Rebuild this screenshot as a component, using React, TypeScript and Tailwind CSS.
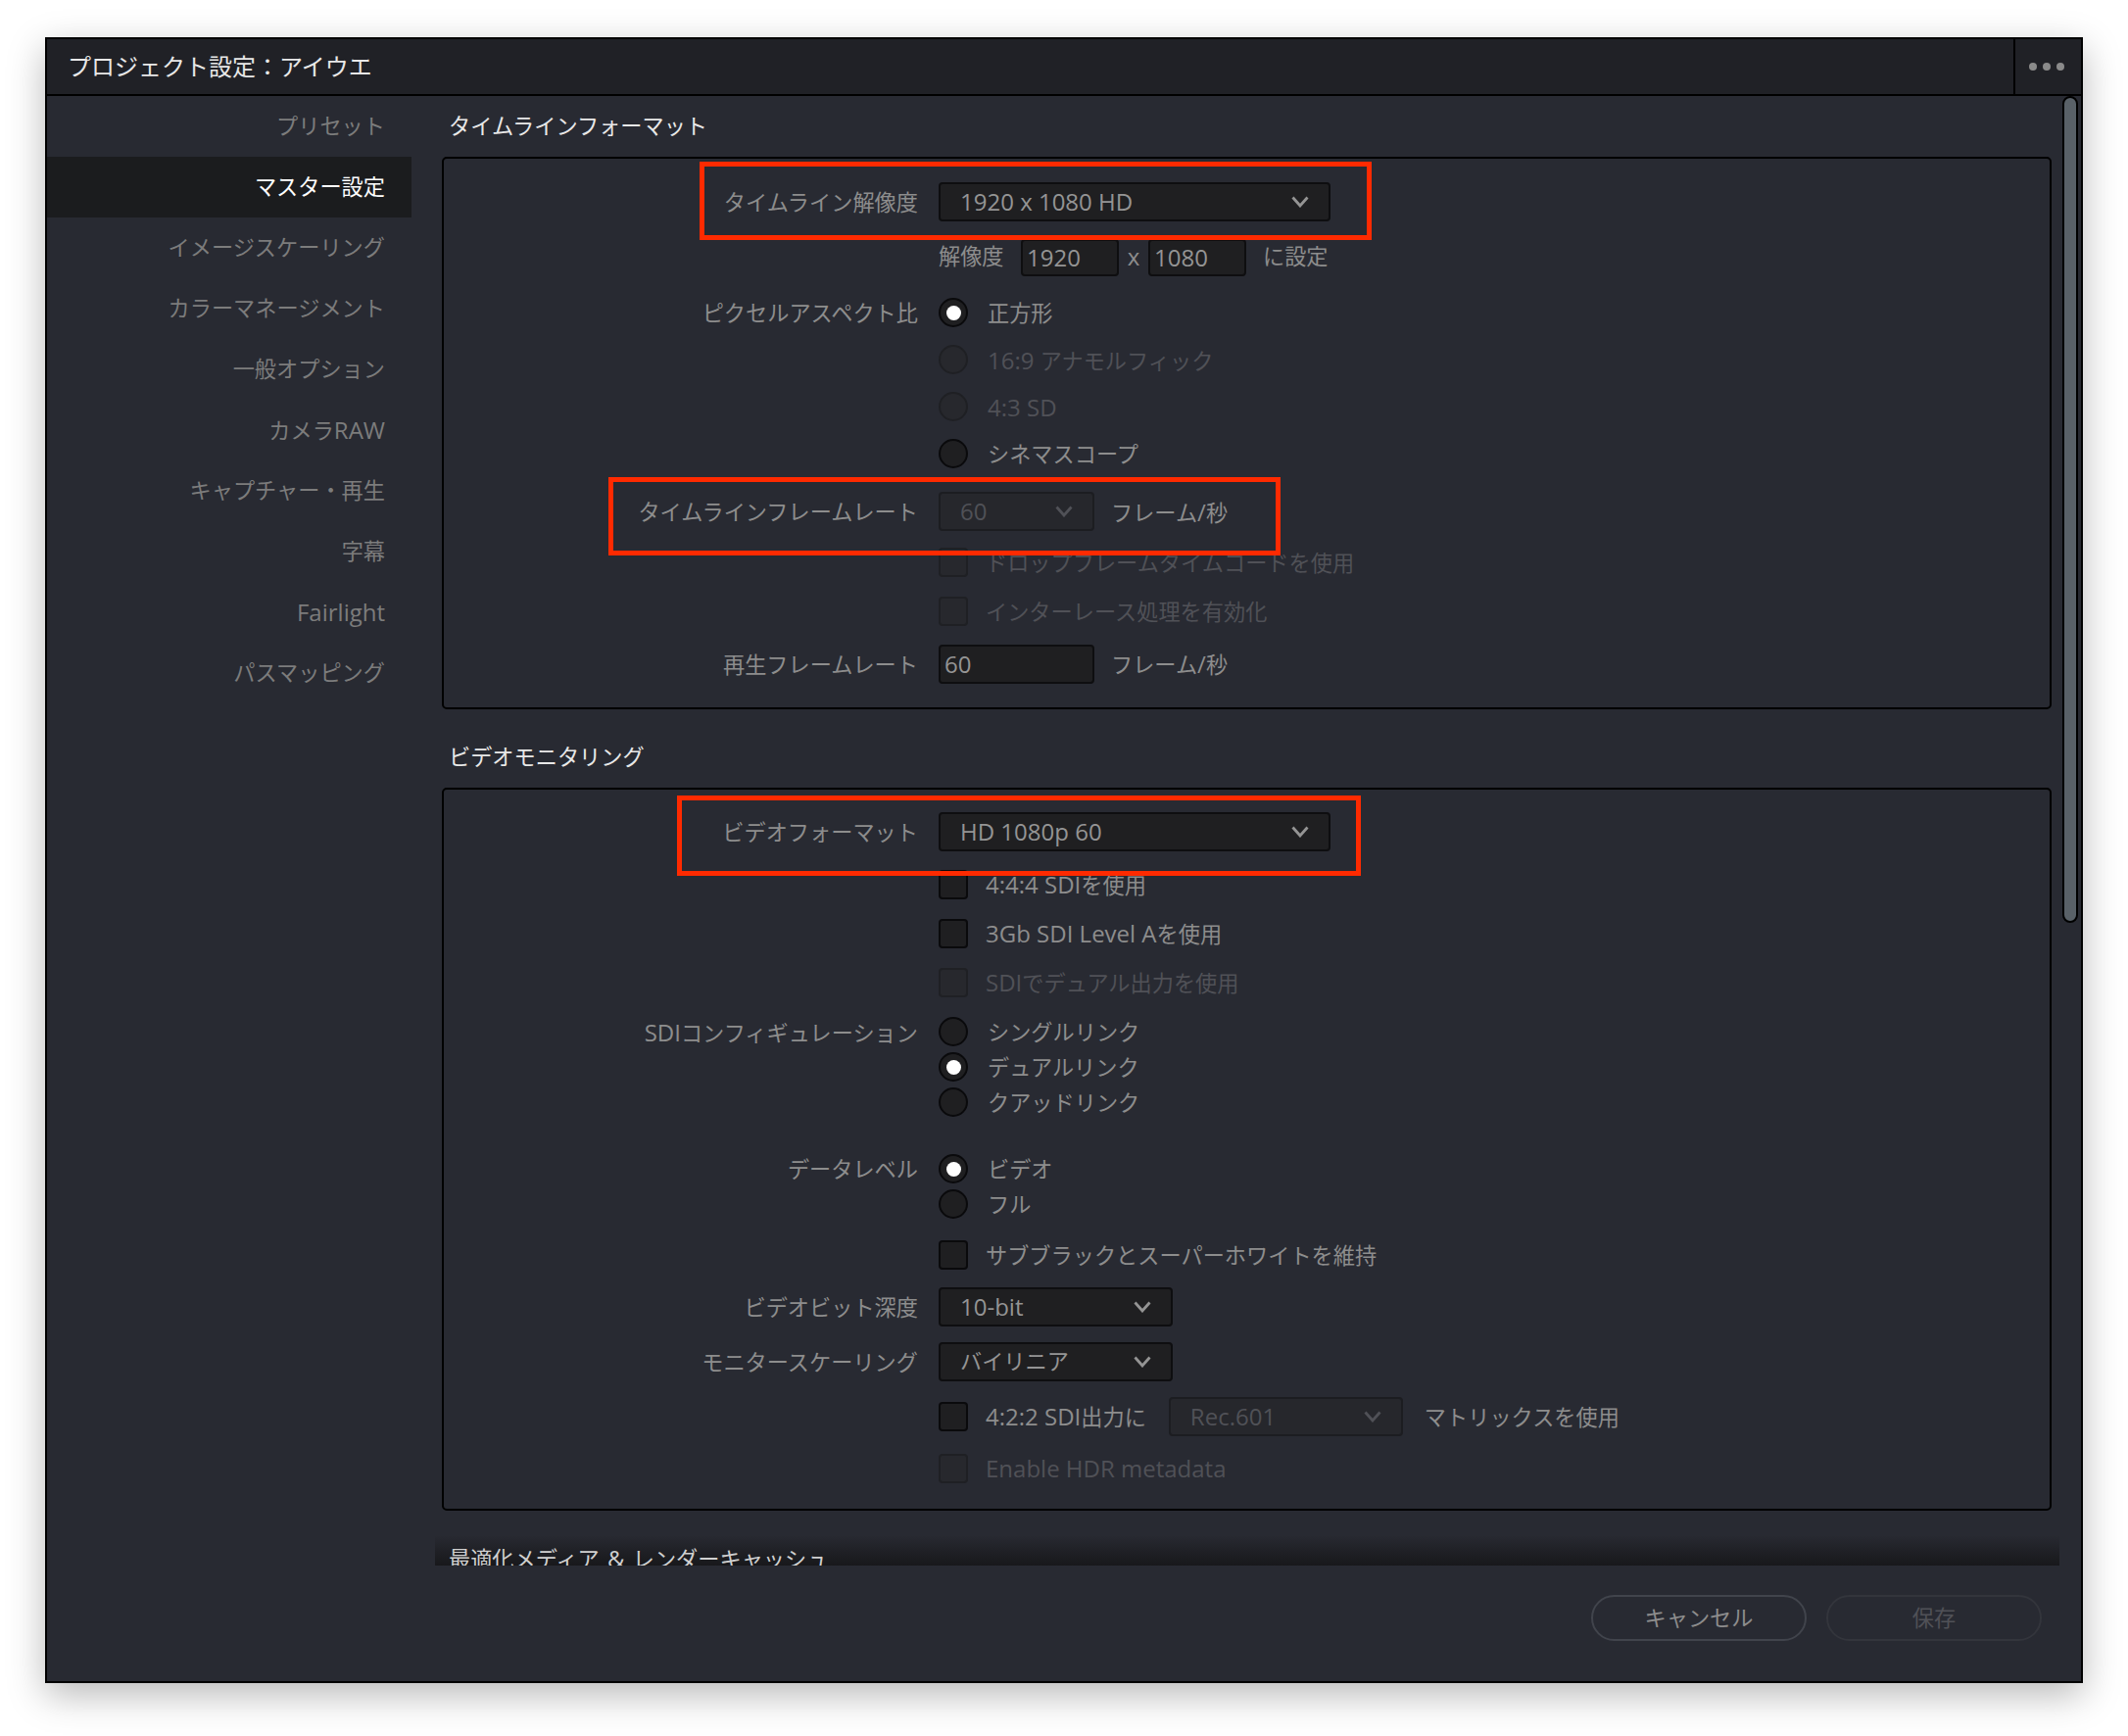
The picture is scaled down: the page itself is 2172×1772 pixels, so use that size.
import React from "react";

const NAV = ["プリセット", "マスター設定", "イメージスケーリング", "カラーマネージメント", "一般オプション", "カメラRAW", "キャプチャー・再生", "字幕", "Fairlight", "パスマッピング"];

/* Latin runs are set slightly larger than the Japanese ones, as in the reference. */
function T({ children }: { children: string }) {
  const parts = children.split(/([\x00-\x7F]+)/).filter(Boolean);
  return (
    <>
      {parts.map((p, i) =>
        /^[\x00-\x7F]+$/.test(p) ? (
          <span key={i} className="text-[24px] whitespace-pre">{p}</span>
        ) : (
          <span key={i}>{p}</span>
        )
      )}
    </>
  );
}

function Chevron({ disabled }: { disabled?: boolean }) {
  return (
    <svg width="18" height="12" viewBox="0 0 18 12" fill="none" className="shrink-0">
      <path d="M1.5 1.5 L9 10 L16.5 1.5" stroke={disabled ? "#505157" : "#949494"} strokeWidth="2.8" />
    </svg>
  );
}

function Select({ w, disabled, children }: { w: string; disabled?: boolean; children: string }) {
  return (
    <div className={`${w} h-[40px] shrink-0 flex items-center justify-between pl-[20px] pr-[20px] rounded-[4px] border-2 ${disabled ? "bg-[#26272c] border-[#1c1d21] text-[#505157]" : "bg-[#1f1f21] border-[#0e0e10] text-[#949494]"}`}>
      <span><T>{children}</T></span>
      <Chevron disabled={disabled} />
    </div>
  );
}

function Input({ w, h, children }: { w: string; h: string; children: string }) {
  return (
    <div className={`${w} ${h} shrink-0 flex items-center pl-[4px] rounded-[4px] border-2 bg-[#1f1f21] border-[#0e0e10] text-[#949494]`}><T>{children}</T></div>
  );
}

function Row({ label, h, mt, children }: { label?: string; h: string; mt?: string; children: React.ReactNode }) {
  return (
    <div className={`flex items-center gap-[21px] ${h} ${mt ?? ""}`}>
      <div className="w-[484px] shrink-0 text-right text-[#8d8d8d] whitespace-nowrap translate-y-[1px]">{label && <T>{label}</T>}</div>
      <div className="flex items-center whitespace-nowrap">{children}</div>
    </div>
  );
}

function Radio({ on, disabled, children }: { on?: boolean; disabled?: boolean; children: string }) {
  return (
    <>
      <div className={`w-[30px] h-[30px] shrink-0 rounded-full border-2 flex items-center justify-center ${disabled ? "bg-[#27282d] border-[#1f2024]" : "bg-[#1f1f21] border-[#0a0a0c]"}`}>
        {on && <div className="w-[15px] h-[15px] rounded-full bg-white" />}
      </div>
      <span className={`ml-[20px] translate-y-[1px] ${disabled ? "text-[#505157]" : "text-[#8d8d8d]"}`}><T>{children}</T></span>
    </>
  );
}

function Check({ disabled, children }: { disabled?: boolean; children: string }) {
  const jp = /^[^\x00-\x7F]/.test(children);
  return (
    <>
      <div className={`w-[30px] h-[30px] shrink-0 rounded-[4px] border-2 ${disabled ? "bg-[#27282d] border-[#1f2024]" : "bg-[#1f1f21] border-[#0a0a0c]"}`} />
      <span className={`ml-[18px] ${jp ? "translate-y-[1px]" : ""} ${disabled ? "text-[#505157]" : "text-[#8d8d8d]"}`}><T>{children}</T></span>
    </>
  );
}

function Annotation({ cls }: { cls: string }) {
  return <div className={`absolute border-[5px] border-[#ff2a00] ${cls}`} />;
}

export default function App() {
  return (
    <div className="relative w-[2172px] h-[1772px] bg-white pt-[38px] pl-[46px] overflow-hidden font-['Open_Sans','Noto_Sans_CJK_JP',sans-serif] text-[22.2px] leading-[30px]">
      <div className="w-[2080px] h-[1680px] flex flex-col border-2 border-black bg-[#282a32] shadow-[0_12px_36px_rgba(0,0,0,0.28)]">
        {/* Title bar */}
        <div className="h-[58px] shrink-0 flex items-stretch bg-[#202126] border-b-2 border-black">
          <div className="flex-1 flex items-center pl-[21px] text-[24px] text-[#e8e8e8]">プロジェクト設定：アイウエ</div>
          <div className="w-[69px] border-l-2 border-black flex items-center justify-center gap-[6px] pr-[4px]">
            <span className="w-[8px] h-[8px] rounded-full bg-[#8a8a8a]" />
            <span className="w-[8px] h-[8px] rounded-full bg-[#8a8a8a]" />
            <span className="w-[8px] h-[8px] rounded-full bg-[#8a8a8a]" />
          </div>
        </div>

        {/* Body */}
        <div className="h-[1500px] shrink-0 flex">
          <nav className="w-[372px] shrink-0">
            {NAV.map((n, i) => (
              <div key={n} className={`h-[62px] flex items-center justify-end pr-[27px] ${i === 1 ? "bg-[#1b1c1e] text-white" : "text-[#7c7c7c]"}`}><span><T>{n}</T></span></div>
            ))}
          </nav>

          <main className="w-[1685px] shrink-0 pl-[31px] overflow-hidden">
            <div className="w-[1643px]">
              <div className="h-[62px] flex items-center pl-[7px] text-[#e8e8e8]">タイムラインフォーマット</div>
              <section className="h-[564px] border-2 border-black rounded-[5px] pt-[24px]">
                <Row label="タイムライン解像度" h="h-[40px]">
                  <Select w="w-[400px]">1920 x 1080 HD</Select>
                </Row>
                <Row h="h-[38px]" mt="mt-[18px]">
                  <span className="text-[#8d8d8d] w-[84px] pb-[2px]">解像度</span>
                  <Input w="w-[100px]" h="h-[38px]">1920</Input>
                  <span className="text-[#8d8d8d] w-[30px] text-center pb-[2px]"><T>x</T></span>
                  <Input w="w-[100px]" h="h-[38px]">1080</Input>
                  <span className="text-[#8d8d8d] ml-[17px] pb-[2px]">に設定</span>
                </Row>
                <Row label="ピクセルアスペクト比" h="h-[48px]" mt="mt-[13px]"><Radio on>正方形</Radio></Row>
                <Row h="h-[48px]"><Radio disabled>16:9 アナモルフィック</Radio></Row>
                <Row h="h-[48px]"><Radio disabled>4:3 SD</Radio></Row>
                <Row h="h-[48px]"><Radio>シネマスコープ</Radio></Row>
                <Row label="タイムラインフレームレート" h="h-[40px]" mt="mt-[15px]">
                  <Select w="w-[159px]" disabled>60</Select>
                  <span className="ml-[17px] translate-y-[1px] text-[#8d8d8d]"><T>フレーム/秒</T></span>
                </Row>
                <Row h="h-[50px]" mt="mt-[7px]"><Check disabled>ドロップフレームタイムコードを使用</Check></Row>
                <Row h="h-[50px]"><Check disabled>インターレース処理を有効化</Check></Row>
                <Row label="再生フレームレート" h="h-[40px]" mt="mt-[9px]">
                  <Input w="w-[159px]" h="h-[40px]">60</Input>
                  <span className="ml-[17px] text-[#8d8d8d]"><T>フレーム/秒</T></span>
                </Row>
              </section>

              <div className="h-[80px] pt-[17px] flex items-center pl-[7px] text-[#e8e8e8]">ビデオモニタリング</div>
              <section className="h-[738px] border-2 border-black rounded-[5px] pt-[23px]">
                <Row label="ビデオフォーマット" h="h-[40px]">
                  <Select w="w-[400px]">HD 1080p 60</Select>
                </Row>
                <Row h="h-[50px]" mt="mt-[9px]"><Check>4:4:4 SDIを使用</Check></Row>
                <Row h="h-[50px]"><Check>3Gb SDI Level Aを使用</Check></Row>
                <Row h="h-[50px]"><Check disabled>SDIでデュアル出力を使用</Check></Row>
                <Row label="SDIコンフィギュレーション" h="h-[36px]" mt="mt-[7px]"><Radio>シングルリンク</Radio></Row>
                <Row h="h-[36px]"><Radio on>デュアルリンク</Radio></Row>
                <Row h="h-[36px]"><Radio>クアッドリンク</Radio></Row>
                <Row label="データレベル" h="h-[36px]" mt="mt-[32px]"><Radio on>ビデオ</Radio></Row>
                <Row h="h-[36px]"><Radio>フル</Radio></Row>
                <Row h="h-[36px]" mt="mt-[16px]"><Check>サブブラックとスーパーホワイトを維持</Check></Row>
                <Row label="ビデオビット深度" h="h-[40px]" mt="mt-[15px]">
                  <Select w="w-[239px]">10-bit</Select>
                </Row>
                <Row label="モニタースケーリング" h="h-[40px]" mt="mt-[16px]">
                  <Select w="w-[239px]">バイリニア</Select>
                </Row>
                <Row h="h-[40px]" mt="mt-[16px]">
                  <Check>4:2:2 SDI出力に</Check>
                  <div className="w-[23px] shrink-0" />
                  <Select w="w-[239px]" disabled>Rec.601</Select>
                  <span className="ml-[22px] translate-y-[1px] text-[#8d8d8d]">マトリックスを使用</span>
                </Row>
                <Row h="h-[30px]" mt="mt-[18px]"><Check disabled>Enable HDR metadata</Check></Row>
              </section>

              <div className="mt-[25px] -ml-[7px] w-[1658px] h-[31px] overflow-hidden pl-[14px] pt-[9px] bg-gradient-to-b from-[#282a32] to-[#18181b] text-[#d0d0d0] whitespace-nowrap">
                最適化メディア<span className="text-[24px] whitespace-pre mx-[2px]"> &amp; </span>レンダーキャッシュ
              </div>
            </div>
          </main>

          <div className="w-[16px] h-[844px] shrink-0 rounded-full border-2 border-black bg-[#596168]" />
        </div>

        {/* Footer */}
        <div className="flex-1 flex justify-end items-start gap-[20px] pt-[30px] pr-[40px]">
          <div className="w-[220px] h-[47px] rounded-full border-2 border-[#41444c] flex items-center justify-center text-[#8d8d8d]">キャンセル</div>
          <div className="w-[220px] h-[47px] rounded-full border-2 border-[#33353c] flex items-center justify-center text-[#505157]">保存</div>
        </div>
      </div>

      <Annotation cls="left-[714px] top-[165px] w-[686px] h-[80px]" />
      <Annotation cls="left-[621px] top-[487px] w-[686px] h-[80px]" />
      <Annotation cls="left-[691px] top-[812px] w-[698px] h-[82px]" />
    </div>
  );
}
